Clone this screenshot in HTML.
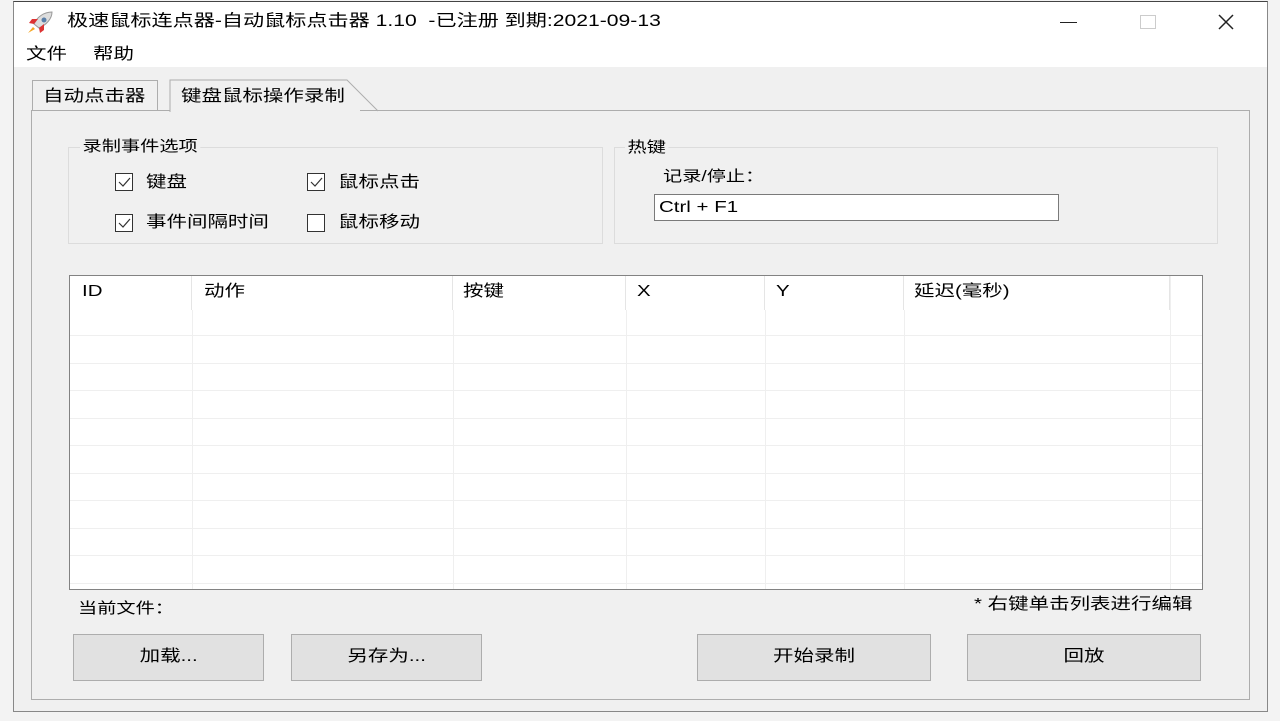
<!DOCTYPE html>
<html><head><meta charset="utf-8"><style>
*{box-sizing:border-box;margin:0;padding:0}
body{width:1280px;height:721px;background:#f3f3f3;position:relative;overflow:hidden;font-family:"Liberation Sans","Noto Sans CJK SC",sans-serif;font-size:16px;color:#000}
.a{position:absolute}
.s{transform:scaleX(1.28);transform-origin:0 0;white-space:nowrap;line-height:18px}
.win{left:13px;top:1px;width:1255px;height:711px;background:#f0f0f0;border:1px solid #888;border-top-color:#444}
.title{left:0;top:0;width:1253px;height:40px;background:#fff}
.menu{left:0;top:40px;width:1253px;height:25px;background:#fff}
.grp{border:1px solid #dcdcdc}
.lg{background:#f0f0f0;padding:0 2px;font-size:15px}
.cb{width:18px;height:18px;border:1px solid #333;background:#fff}
.btn{background:#e1e1e1;border:1px solid #adadad;text-align:center;line-height:44px;font-size:16px}
.btn span{display:inline-block;transform:scaleX(1.28)}
.hl{position:absolute;left:0;right:0;height:1px;background:#efefef}
.vl{position:absolute;top:0;bottom:0;width:1px;background:#efefef}
</style></head><body>
<div class="a win">
 <div class="a title">
  <svg class="a" style="left:12px;top:9px" width="28" height="24" viewBox="0 0 28 24"><path d="M26 1 C18 1 11 6 8 13 L13 17 C20 14 26 8 26 1Z" fill="#ddd" stroke="#999"/><circle cx="18" cy="9" r="2.5" fill="#5a7fa8"/><path d="M8 13 L3 12 L6 8 L12 8Z M13 17 L14 22 L18 19 L18 13Z" fill="#d33"/><path d="M7 16 L2 22 L9 18Z" fill="#f5a623"/></svg>
  <div class="a s" style="left:53px;top:10px;font-size:16.5px;line-height:19px">极速鼠标连点器-自动鼠标点击器 1.10&nbsp; -已注册 到期:2021-09-13</div>
  <div class="a" style="left:1046px;top:20px;width:17px;height:1px;background:#222"></div>
  <div class="a" style="left:1126px;top:13px;width:16px;height:14px;border:1px solid #ccc"></div>
  <svg class="a" style="left:1203px;top:11px" width="18" height="18"><path d="M2 2L16 16M16 2L2 16" stroke="#222" stroke-width="1.5"/></svg>
 </div>
 <div class="a menu"><span class="a s" style="left:12px;top:4px">文件</span><span class="a s" style="left:79px;top:4px">帮助</span></div>
 <div class="a" style="left:18px;top:78px;width:126px;height:30px;border:1px solid #adadad;border-bottom:none;background:#f0f0f0"></div>
 <div class="a s" style="left:29px;top:86px">自动点击器</div>
 <svg class="a" style="left:155px;top:76px" width="210" height="34"><path d="M1 34 L1 2 L178 2 L209 33" fill="#f0f0f0" stroke="#adadad"/></svg>
 <div class="a s" style="left:167px;top:86px">键盘鼠标操作录制</div>
 <div class="a" style="left:17px;top:108px;width:1219px;height:590px;border:1px solid #adadad;border-top:none"></div>
 <div class="a" style="left:346px;top:108px;width:890px;height:1px;background:#adadad"></div>
 <div class="a" style="left:17px;top:108px;width:139px;height:1px;background:#adadad"></div>
 <div class="a grp" style="left:54px;top:145px;width:535px;height:97px"></div>
 <div class="a lg s" style="left:66px;top:136px;font-size:15px">录制事件选项</div>
 <div class="a cb" style="left:101px;top:171px"></div><svg class="a" style="left:101px;top:171px" width="18" height="18"><path d="M4 9L8 13L15 5" stroke="#333" fill="none" stroke-width="1.2"/></svg><div class="a s" style="left:132px;top:172px">键盘</div>
 <div class="a cb" style="left:293px;top:171px"></div><svg class="a" style="left:293px;top:171px" width="18" height="18"><path d="M4 9L8 13L15 5" stroke="#333" fill="none" stroke-width="1.2"/></svg><div class="a s" style="left:324px;top:172px">鼠标点击</div>
 <div class="a cb" style="left:101px;top:212px"></div><svg class="a" style="left:101px;top:212px" width="18" height="18"><path d="M4 9L8 13L15 5" stroke="#333" fill="none" stroke-width="1.2"/></svg><div class="a s" style="left:132px;top:212px">事件间隔时间</div>
 <div class="a cb" style="left:293px;top:212px"></div><div class="a s" style="left:324px;top:212px">鼠标移动</div>
 <div class="a grp" style="left:600px;top:145px;width:604px;height:97px"></div>
 <div class="a lg s" style="left:611px;top:137px;font-size:15px">热键</div>
 <div class="a s" style="left:649px;top:166px;font-size:15px">记录/停止：</div>
 <div class="a" style="left:640px;top:192px;width:405px;height:27px;background:#fff;border:1px solid #7a7a7a"></div>
 <div class="a s" style="left:645px;top:197px">Ctrl + F1</div>
 <div class="a" style="left:55px;top:273px;width:1134px;height:315px;background:#fff;border:1px solid #828282;overflow:hidden">
  <div class="vl" style="left:122px"></div><div class="vl" style="left:383px"></div><div class="vl" style="left:556px"></div><div class="vl" style="left:695px"></div><div class="vl" style="left:834px"></div><div class="vl" style="left:1100px"></div>
  <div class="hl" style="top:59px"></div><div class="hl" style="top:87px"></div><div class="hl" style="top:114px"></div><div class="hl" style="top:142px"></div><div class="hl" style="top:169px"></div><div class="hl" style="top:197px"></div><div class="hl" style="top:224px"></div><div class="hl" style="top:252px"></div><div class="hl" style="top:279px"></div><div class="hl" style="top:307px"></div>
  <div class="a" style="left:0;top:0;width:1100px;height:34px;background:#fff"></div>
  <div class="vl" style="left:121px;height:34px;background:#e5e5e5"></div><div class="vl" style="left:382px;height:34px;background:#e5e5e5"></div><div class="vl" style="left:555px;height:34px;background:#e5e5e5"></div><div class="vl" style="left:694px;height:34px;background:#e5e5e5"></div><div class="vl" style="left:833px;height:34px;background:#e5e5e5"></div><div class="vl" style="left:1099px;height:34px;background:#e5e5e5"></div>
  <div class="a s" style="left:12px;top:7px">ID</div><div class="a s" style="left:134px;top:7px">动作</div><div class="a s" style="left:393px;top:7px">按键</div><div class="a s" style="left:567px;top:7px">X</div><div class="a s" style="left:706px;top:7px">Y</div><div class="a s" style="left:844px;top:7px">延迟(毫秒)</div>
 </div>
 <div class="a s" style="left:64px;top:598px;font-size:15px">当前文件：</div>
 <div class="a s" style="left:960px;top:594px">* 右键单击列表进行编辑</div>
 <div class="a btn" style="left:59px;top:632px;width:191px;height:47px"><span>加载...</span></div>
 <div class="a btn" style="left:277px;top:632px;width:191px;height:47px"><span>另存为...</span></div>
 <div class="a btn" style="left:683px;top:632px;width:234px;height:47px"><span>开始录制</span></div>
 <div class="a btn" style="left:953px;top:632px;width:234px;height:47px"><span>回放</span></div>
</div>
</body></html>
